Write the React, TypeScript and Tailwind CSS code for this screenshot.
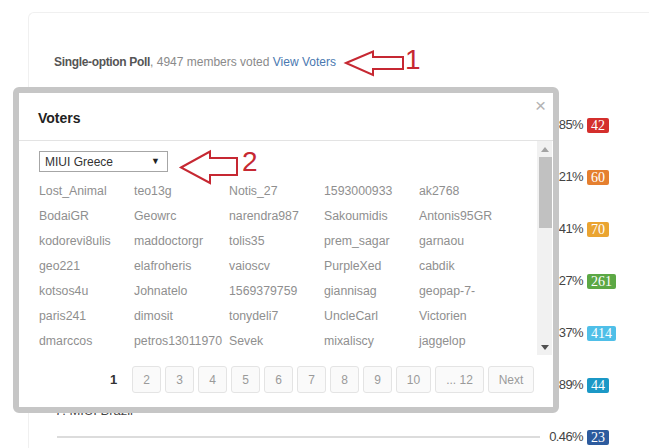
import React from "react";

const rows = [
  { label: "1. MIUI India", pct: "0.85%", n: "42", c: "bg-[#d42f2c]" },
  { label: "2. MIUI Russia", pct: "1.21%", n: "60", c: "bg-[#e57f2f]" },
  { label: "3. MIUI Indonesia", pct: "1.41%", n: "70", c: "bg-[#eaa431]" },
  { label: "4. MIUI Greece", pct: "5.27%", n: "261", c: "bg-[#5ca845]" },
  { label: "5. MIUI Italy", pct: "8.37%", n: "414", c: "bg-[#4fbfe8]" },
  { label: "6. MIUI Turkey", pct: "0.89%", n: "44", c: "bg-[#1b98c6]" },
  { label: "7. MIUI Brazil", pct: "0.46%", n: "23", c: "bg-[#2d5b9e]" },
];

const names = [
  "Lost_Animal", "teo13g", "Notis_27", "1593000933", "ak2768",
  "BodaiGR", "Geowrc", "narendra987", "Sakoumidis", "Antonis95GR",
  "kodorevi8ulis", "maddoctorgr", "tolis35", "prem_sagar", "garnaou",
  "geo221", "elafroheris", "vaioscv", "PurpleXed", "cabdik",
  "kotsos4u", "Johnatelo", "1569379759", "giannisag", "geopap-7-",
  "paris241", "dimosit", "tonydeli7", "UncleCarl", "Victorien",
  "dmarccos", "petros13011970", "Sevek", "mixaliscy", "jaggelop",
];

const pages = [
  { t: "2", w: "w-[29px]" },
  { t: "3", w: "w-[29px]" },
  { t: "4", w: "w-[29px]" },
  { t: "5", w: "w-[29px]" },
  { t: "6", w: "w-[29px]" },
  { t: "7", w: "w-[29px]" },
  { t: "8", w: "w-[29px]" },
  { t: "9", w: "w-[29px]" },
  { t: "10", w: "w-[35px]" },
  { t: "... 12", w: "w-[49px]" },
  { t: "Next", w: "w-[46px]" },
];

export default function App() {
  return (
    <div className="relative w-[649px] h-[448px] overflow-hidden bg-white font-['Liberation_Sans',Arial,sans-serif]">
      {/* poll card */}
      <div className="ml-[28px] mt-[12px] h-[436px] border-l border-t border-[#f0f0f0] rounded-tl-[6px] pl-[25px] pt-[41px]">
        <div className="text-[12px] leading-[16px] text-[#8a8a8a] whitespace-nowrap">
          <span className="font-bold text-[#555] tracking-[-0.33px]">Single-option Poll</span>, 4947 members voted{" "}
          <span className="text-[#4a78b0]">View Voters</span>
        </div>
        <div className="mt-[21px]">
          {rows.map((r) => (
            <div key={r.label} className="mb-[8px]">
              <div className="ml-[1px] h-[16px] text-[13px] leading-[16px] text-[#444]">{r.label}</div>
              <div className="mt-[8px] h-[20px] flex items-center">
                <div className="ml-[3px] w-[483px] h-[2px] bg-[#dcdcdc]" />
                <div className="w-[43px] text-right text-[13px] tracking-[-0.6px] text-[#444]">{r.pct}</div>
                <div
                  className={`ml-[4px] h-[15px] px-[4px] rounded-[2px] text-white text-[14px] leading-[15px] font-['Liberation_Serif',serif] ${r.c}`}
                >
                  {r.n}
                </div>
              </div>
            </div>
          ))}
        </div>
      </div>

      {/* modal */}
      <div className="absolute left-[13px] top-[87px] w-[546px] h-[326px] border-[6px] border-[#c6c6c6] rounded-[6px] bg-white">
        <div className="relative h-[48px] border-b border-[#e3e3e3] flex items-center pl-[19px] pt-[4px]">
          <span className="text-[14px] font-bold text-[#222]">Voters</span>
          <span className="absolute right-[7px] top-[3px] text-[19px] leading-none text-[#b3b3b3]">×</span>
        </div>
        <div className="flex h-[214px]">
          <div className="w-[518px] overflow-hidden pl-[20px] pt-[10px]">
            <div className="w-[129px] h-[21px] border border-[#a6a6a6] flex items-center pl-[5px] text-[12px] text-[#333]">
              <span>MIUI Greece</span>
              <span className="ml-auto mr-[7px] text-[9px] leading-none text-[#222]">▼</span>
            </div>
            <div className="mt-[7px] grid grid-cols-[95px_95px_95px_95px_95px]">
              {names.map((n, i) => (
                <div key={i} className="h-[25px] leading-[25px] text-[12.3px] text-[#8f8f8f] whitespace-nowrap">
                  {n}
                </div>
              ))}
            </div>
          </div>
          <div className="w-[15px] h-full bg-[#f1f1f1] flex flex-col">
            <div className="h-[16px] flex items-center justify-center">
              <svg width="8" height="5" viewBox="0 0 8 5">
                <path d="M0 5 L4 0 L8 5 Z" fill="#a3a3a3" />
              </svg>
            </div>
            <div className="h-[71px] ml-[2px] w-[13px] bg-[#c1c1c1]" />
            <div className="flex-1" />
            <div className="h-[16px] flex items-center justify-center">
              <svg width="8" height="5" viewBox="0 0 8 5">
                <path d="M0 0 L4 5 L8 0 Z" fill="#505050" />
              </svg>
            </div>
          </div>
        </div>
        <div className="flex justify-end items-center gap-[4px] pr-[19px] pt-[11px]">
          <span className="w-[29px] text-center text-[13px] font-bold text-[#333]">1</span>
          {pages.map((p) => (
            <span
              key={p.t}
              className={`${p.w} h-[27px] flex items-center justify-center border border-[#e4e4e4] rounded-[3px] bg-[#fafafa] text-[12px] text-[#9a9a9a]`}
            >
              {p.t}
            </span>
          ))}
        </div>
      </div>

      {/* annotation arrows */}
      <svg className="absolute left-0 top-0 pointer-events-none" width="649" height="448" viewBox="0 0 649 448">
        <path
          d="M346 63 L373 51.5 L373 57 L403 57 L403 69 L373 69 L373 75 Z"
          fill="none"
          stroke="#c62832"
          strokeWidth="2"
          strokeLinejoin="miter"
        />
        <path
          d="M181 167.5 L210 151.5 L210 158 L237 158 L237 175 L210 175 L210 183 Z"
          fill="none"
          stroke="#c62832"
          strokeWidth="2"
          strokeLinejoin="miter"
        />
      </svg>
      <span className="absolute left-[405px] top-[44px] text-[28px] leading-[32px] text-[#c62832]">1</span>
      <span className="absolute left-[242px] top-[146px] text-[28px] leading-[32px] text-[#c62832]">2</span>
    </div>
  );
}
